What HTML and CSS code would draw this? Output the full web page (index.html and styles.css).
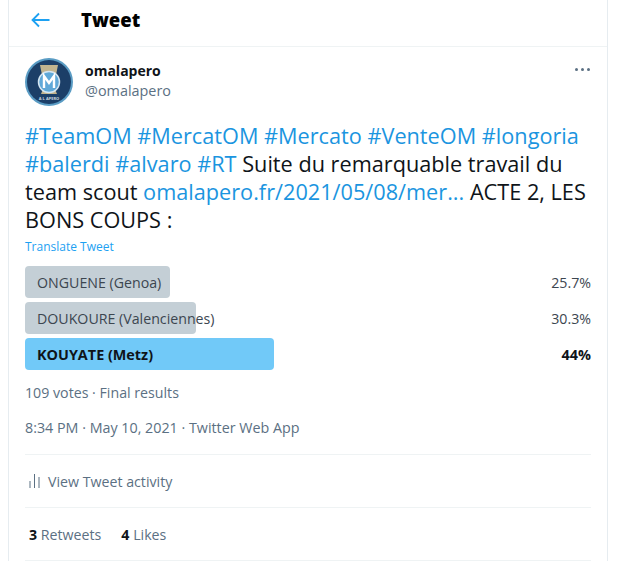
FILE: index.html
```html
<!DOCTYPE html>
<html lang="en">
<head>
<meta charset="utf-8">
<title>Tweet</title>
<link rel="stylesheet" href="styles.css">
</head>
<body>
<main class="column">
  <header class="topbar">
    <svg class="back" viewBox="0 0 20 16" width="20" height="16"><path d="M8 1.500 1.500 8 8 14.500M1.500 8H18.500" fill="none" stroke="#1da1f2" stroke-width="1.800"/></svg>
    <h1 class="title">Tweet</h1>
  </header>
  <article class="tweet">
    <div class="author">
      <svg class="avatar" viewBox="0 0 48 48" width="48" height="48">
        <circle cx="24" cy="24" r="24" fill="#5a9cc4"/>
        <circle cx="24" cy="24" r="22" fill="#1c3f68"/>
        <path d="M15 7H33L31 17H17ZM18 31H30L32 36H16Z" fill="#c2b48f"/>
        <circle cx="24" cy="24" r="10.500" fill="#5fa8d8" stroke="#d5e6f2" stroke-width="1.500"/>
        <path d="M19 30V18L24 25 29 18V30" fill="none" stroke="#fff" stroke-width="2.400"/>
        <text class="avatar-label" x="24" y="41.500">A L APERO</text>
      </svg>
      <div class="names">
        <div class="name">omalapero</div>
        <div class="handle">@omalapero</div>
      </div>
      <svg class="more" viewBox="0 0 15 3" width="15" height="3"><circle cx="1.500" cy="1.500" r="1.500"/><circle cx="7.500" cy="1.500" r="1.500"/><circle cx="13.500" cy="1.500" r="1.500"/></svg>
    </div>
    <p class="text"><a>#TeamOM</a> <a>#MercatOM</a> <a>#Mercato</a> <a>#VenteOM</a> <a>#longoria</a> <a>#balerdi</a> <a>#alvaro</a> <a>#RT</a> Suite du remarquable travail du team scout <a>omalapero.fr/2021/05/08/mer...</a> ACTE 2, LES BONS COUPS :</p>
    <div class="translate">Translate Tweet</div>
    <div class="poll">
      <div class="choice"><div class="bar" style="width:145px"></div><span class="label">ONGUENE (Genoa)</span><span class="pct">25.7%</span></div>
      <div class="choice"><div class="bar" style="width:171px"></div><span class="label">DOUKOURE (Valenciennes)</span><span class="pct">30.3%</span></div>
      <div class="choice winner"><div class="bar" style="width:249px"></div><span class="label">KOUYATE (Metz)</span><span class="pct">44%</span></div>
    </div>
    <div class="votes">109 votes · Final results</div>
    <div class="date">8:34 PM · May 10, 2021 · Twitter Web App</div>
    <div class="activity">
      <svg class="activity-icon" viewBox="0 0 11 14" width="11" height="14"><path d="M1 7V14M5.500 0V14M10 3V14" stroke="#5b7083" stroke-width="1" fill="none"/></svg>
      <span>View Tweet activity</span>
    </div>
    <div class="stats"><span><b>3</b> Retweets</span><span><b>4</b> Likes</span></div>
  </article>
</main>
</body>
</html>
```
FILE: styles.css
```css
* { box-sizing: border-box; }
html, body { margin: 0; height: 561px; overflow: hidden; background: #fff; }
body { font-family: "Open Sans", "Noto Sans", sans-serif; color: #0f1419; }
.column {
  width: 600px;
  height: 561px;
  margin-left: 8px;
  border-left: 1px solid #e6ecf0;
  border-right: 1px solid #e6ecf0;
}
.topbar {
  height: 47px;
  display: flex;
  align-items: center;
  gap: 30px;
  padding: 0 0 6px 22px;
  border-bottom: 1px solid #eff3f4;
}
.back { flex: none; }
.title { margin: 0; font-size: 18.500px; font-weight: 800; line-height: 26px; color: #000; }
.tweet { padding: 11px 16px 0; }
.author { display: flex; align-items: flex-start; }
.avatar { flex: none; display: block; }
.avatar-label { font-size: 4px; font-weight: 700; text-anchor: middle; fill: #c9d6df; }
.names { margin-left: 12px; flex: 1; }
.name { font-size: 14px; font-weight: 700; line-height: 20px; margin-top: 3px; }
.handle { font-size: 14.400px; line-height: 19px; color: #5b7083; }
.more { fill: #5b7083; margin-top: 10px; margin-right: 1px; }
.text { margin: 16px 0 0; font-size: 21.700px; line-height: 28px; color: #0f1419; }
.text a { color: #1b95e0; }
.translate { font-size: 12px; line-height: 16px; color: #1da1f2; margin-top: 5px; }
.poll { margin-top: 11px; display: flex; flex-direction: column; gap: 4px; }
.choice { position: relative; height: 32px; display: flex; align-items: center; justify-content: space-between; padding: 0 0 0 12px; font-size: 14.200px; color: #3c4650; }
.bar { position: absolute; left: 0; top: 0; height: 100%; background: #c4cfd6; border-radius: 4px; }
.label, .pct { position: relative; }
.winner { font-weight: 700; color: #0f1419; font-size: 14.400px; }
.winner .bar { background: #71c9f8; }
.votes { margin-top: 13px; font-size: 14.200px; line-height: 20px; color: #5b7083; }
.date { margin-top: 15px; font-size: 14.300px; line-height: 20px; color: #5b7083; padding-bottom: 16px; border-bottom: 1px solid #eff3f4; }
.activity { height: 53px; display: flex; align-items: center; gap: 8px; padding-left: 4px; font-size: 14.200px; color: #5b7083; border-bottom: 1px solid #eff3f4; }
.activity-icon { flex: none; }
.stats { height: 53px; display: flex; align-items: center; gap: 20px; padding-left: 4px; font-size: 14.200px; color: #5b7083; border-bottom: 1px solid #eff3f4; }
.stats b { color: #0f1419; font-weight: 700; }
```
